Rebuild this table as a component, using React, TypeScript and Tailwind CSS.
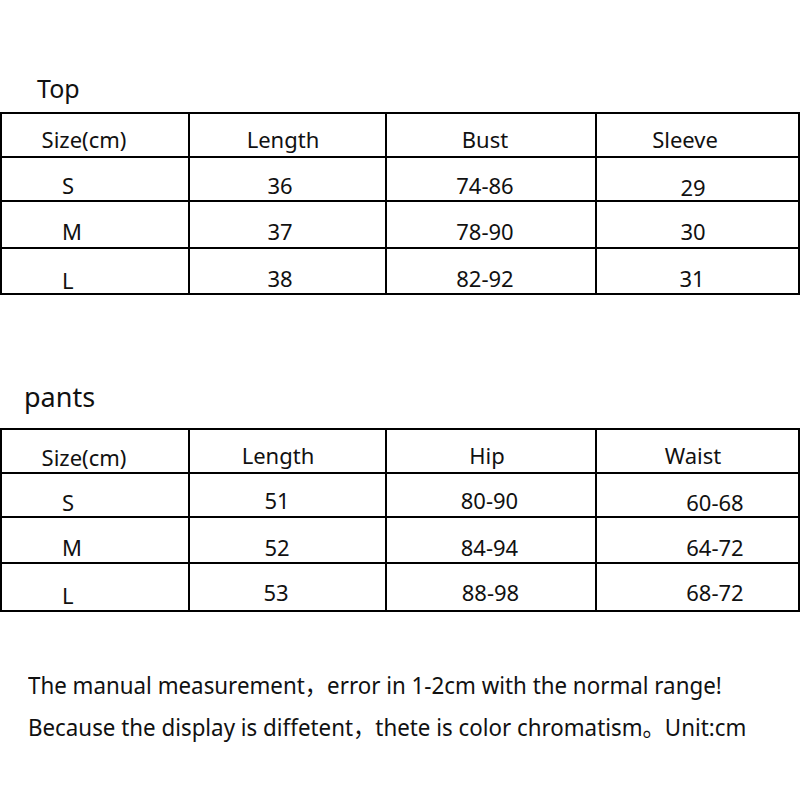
type Cell = { t: string; c: string };
type Row = { h: string; pt: string; cells: Cell[] };

const widths = ["w-[188px]", "w-[197px]", "w-[210px]", "w-[203px]"];

const topRows: Row[] = [
  {
    h: "h-[44px]",
    pt: "pt-[12px]",
    cells: [
      { t: "Size(cm)", c: "text-center pr-[22px]" },
      { t: "Length", c: "text-center pr-[9px]" },
      { t: "Bust", c: "text-center pr-[12px]" },
      { t: "Sleeve", c: "text-center pr-[25px]" },
    ],
  },
  {
    h: "h-[44px]",
    pt: "pt-[14px]",
    cells: [
      { t: "S", c: "pl-[60px]" },
      { t: "36", c: "text-center pr-[15px]" },
      { t: "74-86", c: "text-center pr-[12px]" },
      { t: "29", c: "text-center pr-[9px] pt-[2px]" },
    ],
  },
  {
    h: "h-[47px]",
    pt: "pt-[16px]",
    cells: [
      { t: "M", c: "pl-[60px]" },
      { t: "37", c: "text-center pr-[15px]" },
      { t: "78-90", c: "text-center pr-[12px]" },
      { t: "30", c: "text-center pr-[9px]" },
    ],
  },
  {
    h: "h-[46px]",
    pt: "pt-[16px]",
    cells: [
      { t: "L", c: "pl-[60px] pt-[2px]" },
      { t: "38", c: "text-center pr-[15px]" },
      { t: "82-92", c: "text-center pr-[12px]" },
      { t: "31", c: "text-center pr-[11px]" },
    ],
  },
];

const pantsRows: Row[] = [
  {
    h: "h-[44px]",
    pt: "pt-[12px]",
    cells: [
      { t: "Size(cm)", c: "text-center pr-[22px] pt-[2px]" },
      { t: "Length", c: "text-center pr-[19px]" },
      { t: "Hip", c: "text-center pr-[8px]" },
      { t: "Waist", c: "text-center pr-[9px]" },
    ],
  },
  {
    h: "h-[44px]",
    pt: "pt-[13px]",
    cells: [
      { t: "S", c: "pl-[60px] pt-[2px]" },
      { t: "51", c: "text-center pr-[21px]" },
      { t: "80-90", c: "text-center pr-[3px]" },
      { t: "60-68", c: "text-center pl-[35px] pt-[2px]" },
    ],
  },
  {
    h: "h-[46px]",
    pt: "pt-[16px]",
    cells: [
      { t: "M", c: "pl-[60px]" },
      { t: "52", c: "text-center pr-[21px]" },
      { t: "84-94", c: "text-center pr-[3px]" },
      { t: "64-72", c: "text-center pl-[35px]" },
    ],
  },
  {
    h: "h-[48px]",
    pt: "pt-[15px]",
    cells: [
      { t: "L", c: "pl-[60px] pt-[3px]" },
      { t: "53", c: "text-center pr-[23px]" },
      { t: "88-98", c: "text-center pr-[1px]" },
      { t: "68-72", c: "text-center pl-[35px]" },
    ],
  },
];

function SizeTable({ rows }: { rows: Row[] }) {
  return (
    <div className="border-l-2 border-t-2 border-black w-[800px]">
      {rows.map((r, i) => (
        <div key={i} className={`flex ${r.h}`}>
          {r.cells.map((cell, j) => (
            <div key={j} className={`${widths[j]} border-r-2 border-b-2 border-black ${r.pt}`}>
              <div className={cell.c}>{cell.t}</div>
            </div>
          ))}
        </div>
      ))}
    </div>
  );
}

export default function App() {
  return (
    <main
      className="w-[800px] h-[800px] bg-white text-[#111] overflow-hidden"
      style={{ fontFamily: '"Noto Sans", "Noto Sans CJK SC", sans-serif' }}
    >
      <div className="h-[112px] pt-[73px] pl-[37px] text-[25px] leading-[30px]">Top</div>

      <div className="text-[22px] leading-[26px]">
        <SizeTable rows={topRows} />
      </div>

      <div className="h-[133px] pt-[86px] pl-[24px] text-[27px] leading-[32px]">pants</div>

      <div className="text-[22px] leading-[26px]">
        <SizeTable rows={pantsRows} />
      </div>

      {/* notes */}
      <div className="pt-[52px] pl-[28px] text-[24px] leading-[42px]">
        <div className="whitespace-nowrap origin-left scale-x-[0.93]">
          The manual measurement，error in 1-2cm with the normal range!
        </div>
        <div className="whitespace-nowrap origin-left scale-x-[0.93]">
          Because the display is diffetent，thete is color chromatism。Unit:cm
        </div>
      </div>
    </main>
  );
}
